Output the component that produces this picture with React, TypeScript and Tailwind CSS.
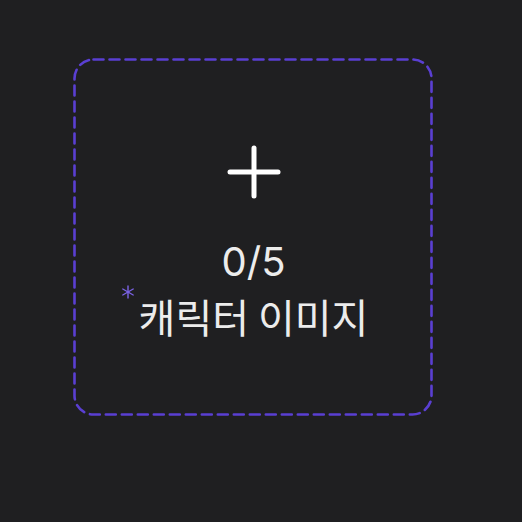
import React from "react";

export default function App() {
  return (
    <div
      className="w-[522px] h-[522px] bg-[#1f1f21] pt-[58px] pl-[73px]"
      style={{ fontFamily: '"Noto Sans CJK KR", "Noto Sans", sans-serif' }}
    >
      <div className="relative w-[360px] h-[358px] rounded-[20px] flex flex-col items-center pt-[87px] pl-[1px]">
        {/* dashed outline */}
        <svg className="absolute inset-0 pointer-events-none" width="360" height="358" fill="none">
          <rect
            x="1.5"
            y="1.5"
            width="357"
            height="355"
            rx="19"
            stroke="#5a3fd2"
            strokeWidth="2.6"
            strokeDasharray="10 6"
            strokeLinecap="round"
          />
        </svg>
        <svg width="54" height="54" viewBox="0 0 54 54" fill="none">
          <line x1="27" y1="3" x2="27" y2="51" stroke="#ffffff" strokeWidth="5" strokeLinecap="round" />
          <line x1="3" y1="27" x2="51" y2="27" stroke="#ffffff" strokeWidth="5" strokeLinecap="round" />
        </svg>
        <div
          className="mt-[39px] text-[40px] leading-[48px] text-[#ececec]"
          style={{ fontFamily: "Inter, sans-serif" }}
        >
          0/5
        </div>
        <div className="relative mt-[6px] text-[40px] leading-[48px] text-[#ececec]">
          <svg
            className="absolute -left-[18px] -top-[7px]"
            width="14"
            height="14"
            viewBox="0 0 14 14"
            fill="none"
            stroke="#7b63e6"
            strokeWidth="1.4"
            strokeLinecap="round"
          >
            <line x1="7" y1="1" x2="7" y2="13" />
            <line x1="1.8" y1="4" x2="12.2" y2="10" />
            <line x1="1.8" y1="10" x2="12.2" y2="4" />
          </svg>
          캐릭터 이미지
        </div>
      </div>
    </div>
  );
}
